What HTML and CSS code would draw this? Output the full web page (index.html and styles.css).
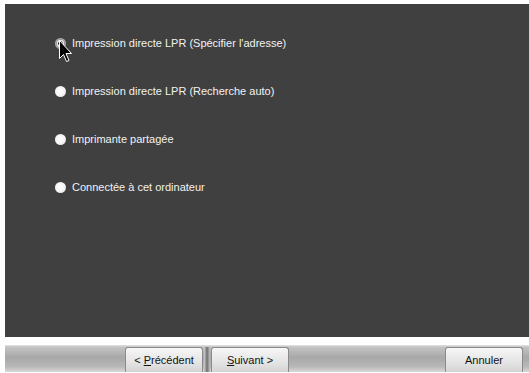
FILE: index.html
```html
<!DOCTYPE html>
<html>
<head>
<meta charset="utf-8">
<link rel="stylesheet" href="styles.css">
</head>
<body>
<div class="panel">
  <ul class="options">
    <li class="opt"><span class="radio checked"></span><span class="label">Impression directe LPR (Spécifier l'adresse)</span></li>
    <li class="opt"><span class="radio"></span><span class="label">Impression directe LPR (Recherche auto)</span></li>
    <li class="opt"><span class="radio"></span><span class="label">Imprimante partagée</span></li>
    <li class="opt"><span class="radio"></span><span class="label">Connectée à cet ordinateur</span></li>
  </ul>
  <svg class="cursor" width="15" height="26" viewBox="0 0 15 26">
    <path d="M1.5 1.5 L1.5 19.5 L5.5 15.5 L8.5 22.5 L11 21.5 L8 14.5 L13.5 14.5 Z" fill="#000" stroke="#fff" stroke-width="1"/>
  </svg>
</div>
<div class="footer">
  <div class="btns">
    <button class="btn"><span class="arrow">&lt;</span> <u>P</u>récédent</button>
    <span class="sep"></span>
    <button class="btn"><u>S</u>uivant <span class="arrow">&gt;</span></button>
  </div>
  <button class="btn cancel">Annuler</button>
</div>
</body>
</html>
```
FILE: styles.css
```css
html, body { margin: 0; padding: 0; }
body {
  background: #fff;
  width: 529px;
  height: 373px;
  overflow: hidden;
  font-family: "Liberation Sans", Arial, sans-serif;
  font-size: 11px;
}
.panel {
  position: relative;
  margin: 4px 0 0 5px;
  height: 333px;
  background: #404040;
}
.options {
  list-style: none;
  margin: 0;
  padding: 33px 0 0 50px;
  display: flex;
  flex-direction: column;
  gap: 36px;
}
.opt {
  display: flex;
  align-items: center;
  height: 12px;
  color: #f2f2f2;
}
.radio {
  width: 11px;
  height: 11px;
  border-radius: 50%;
  background: radial-gradient(circle at 45% 45%, #ffffff 0%, #f4f4f4 55%, #cfcfcf 100%);
  margin-right: 6px;
  flex: none;
  position: relative;
}
.radio.checked {
  background: radial-gradient(circle at 50% 50%, #111 0 2px, #e8e8e8 2.5px 3.5px, #9a9a9a 4px, #dcdcdc 100%);
}
.label { white-space: nowrap; letter-spacing: 0; }
.cursor {
  position: absolute;
  left: 53px;
  top: 35px;
}
.footer {
  margin: 8px 0 0 5px;
  height: 27px;
  background: linear-gradient(#e4e4e4 0, #c4c4c4 2px, #a8a8a8 45%, #b8b8b8 80%, #d8d8d8 100%);
  display: flex;
  align-items: flex-end;
  justify-content: space-between;
  padding: 0 6px 0 120px;
}
.btns { display: flex; align-items: flex-end; }
.btn {
  width: 78px;
  height: 25px;
  border: 1px solid #8a8a8a;
  border-bottom: none;
  border-radius: 3px 3px 0 0;
  background: linear-gradient(#f6f6f6, #e4e4e4 60%, #d4d4d4);
  color: #111;
  font-family: "Liberation Sans", Arial, sans-serif;
  font-size: 11px;
  padding: 0;
}
.sep {
  width: 6px;
  height: 25px;
  margin: 0 1px;
  background: linear-gradient(90deg, #d0d0d0, #707070 50%, #c0c0c0);
}
.cancel { width: 78px; }
u { text-decoration: underline; }
```
